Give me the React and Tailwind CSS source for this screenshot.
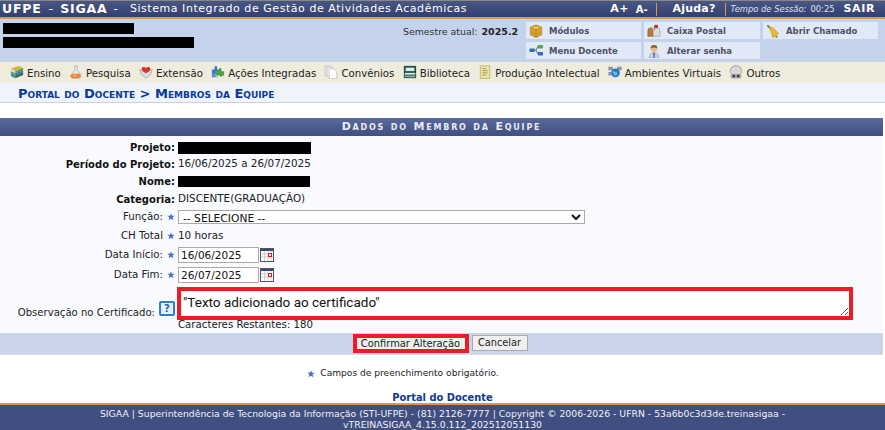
import { useState } from "react";

const menuItems = [
  { label: "Ensino", icon: "books" },
  { label: "Pesquisa", icon: "flask" },
  { label: "Extensão", icon: "heart" },
  { label: "Ações Integradas", icon: "puzzle" },
  { label: "Convênios", icon: "docs" },
  { label: "Biblioteca", icon: "library" },
  { label: "Produção Intelectual", icon: "note" },
  { label: "Ambientes Virtuais", icon: "virtual" },
  { label: "Outros", icon: "others" },
];

function Icon({ name, className = "w-4 h-4" }) {
  const icons = {
    books: (
      <>
        <path d="M1 4l9-3 5 2.500-9 3.500z" fill="#d9b23c" />
        <path d="M1 4l5 3v2.500L1 7z" fill="#e8e0b0" />
        <path d="M6 7l9-3.500v2.500l-9 3.500z" fill="#5f9a3e" />
        <path d="M1 7l5 2.500V12L1 9.500z" fill="#4c8fc0" />
        <path d="M6 9.500l9-3.500v2.500L6 12z" fill="#3a74b4" />
        <path d="M1 9.500L6 12v3l-5-2.500z" fill="#3f8f70" />
        <path d="M6 12l9-3.500v3L6 15z" fill="#2f6a55" />
      </>
    ),
    flask: (
      <>
        <path d="M6.500 1h3v5L13.500 11a3.500 3.500 0 0 1-2.500 4.500H5A3.500 3.500 0 0 1 2.500 11L6.500 6z" fill="#e4e4e4" stroke="#a8a8a8" strokeWidth=".7" />
        <path d="M3.500 10h9l.8 1.800a2.800 2.800 0 0 1-2.500 3.200H4.200a2.800 2.800 0 0 1-2.500-3.200z" fill="#ea8a3c" />
        <circle cx="6.500" cy="12" r="1" fill="#f8c8a0" />
      </>
    ),
    heart: (
      <>
        <path d="M1 5l7 2.500L15 5l-1.500 6L8 15l-5.500-4z" fill="#dcdcdc" stroke="#8c8c8c" strokeWidth=".6" />
        <path d="M8 9.500C4 7.500 2.500 5.500 3.200 3.500 4 1.800 7 2 8 4c1-2 4-2.200 4.800-.5.7 2-.8 4-4.800 6z" fill="#d8342a" />
      </>
    ),
    puzzle: (
      <>
        <path d="M1 5h3V2.500a1.500 1.500 0 0 1 3 0V5h2v5H1z" fill="#3f78c8" />
        <path d="M5 7h4V5a1.500 1.500 0 0 1 3 0v2h3v5h-2a1.500 1.500 0 0 1-3 0H5z" fill="#49a24a" />
        <path d="M1 9h4v3a1.500 1.500 0 0 0 3 0v2H1z" fill="#4f8ad4" />
      </>
    ),
    docs: (
      <>
        <path d="M1 1h6l2 2v9H1z" fill="#ececec" stroke="#bcbcbc" strokeWidth=".8" />
        <path d="M3.500 2.500h6l2 2v9h-8z" fill="#f4f4f4" stroke="#bcbcbc" strokeWidth=".8" />
        <path d="M6 4.500h5.500l3 3v8H6z" fill="#fff" stroke="#bcbcbc" strokeWidth=".8" />
      </>
    ),
    library: (
      <>
        <rect x="1" y="1" width="14" height="14" fill="#1d4f4a" />
        <path d="M3 3h10v4H3z" fill="#dfe9e6" />
        <path d="M2 9h12v2H2z" fill="#dfe9e6" />
        <path d="M2 12h12v2H2z" fill="#8fb0a6" />
      </>
    ),
    note: (
      <>
        <rect x="2.500" y="1" width="11" height="14.500" fill="#eee3a0" stroke="#b0a564" strokeWidth=".8" />
        <path d="M5 4h4M5 6.500h6M5 9h6M5 11.500h4" stroke="#8f8a55" strokeWidth=".9" />
      </>
    ),
    virtual: (
      <>
        <rect x="0.500" y="2" width="5" height="4" fill="#8595a6" />
        <rect x="10.500" y="2" width="5" height="4" fill="#8595a6" />
        <rect x="0.500" y="8" width="3" height="4" fill="#8595a6" />
        <circle cx="8.500" cy="9" r="5" fill="#2076c8" />
        <path d="M5 7.500c2-1.500 3 1 5 0l1 3.500-4 1.500z" fill="#6fb0e6" />
      </>
    ),
    others: (
      <>
        <circle cx="8" cy="7" r="6.500" fill="#dadada" stroke="#8a8a8a" strokeWidth=".7" />
        <circle cx="5" cy="5" r="1.800" fill="#f8f8f8" stroke="#9a9a9a" strokeWidth=".5" />
        <circle cx="10.500" cy="5" r="1.800" fill="#f8f8f8" stroke="#9a9a9a" strokeWidth=".5" />
        <rect x="2" y="10" width="12" height="5.500" rx="2" fill="#a4a4a4" />
        <circle cx="5.500" cy="12.700" r="1.600" fill="#444" />
        <circle cx="10.500" cy="12.700" r="1.600" fill="#444" />
      </>
    ),
    box: (
      <>
        <path d="M8 1l6.500 2.500v9L8 15.500 1.500 12.500v-9z" fill="#d8a030" stroke="#a87818" strokeWidth=".6" />
        <path d="M1.500 3.500L8 6.500l6.500-3" fill="#eec468" stroke="#a87818" strokeWidth=".6" />
        <path d="M8 6.500v9" stroke="#a87818" strokeWidth=".8" />
        <path d="M1.500 9L8 12l6.500-3" fill="none" stroke="#b98a20" strokeWidth=".8" />
      </>
    ),
    mailbox: (
      <>
        <path d="M1 7.500a3 3 0 0 1 6 0V14H1z" fill="#b87c38" stroke="#704818" strokeWidth=".6" />
        <path d="M4 4.500h7a4 4 0 0 1 4 4V14H7V7.500a3 3 0 0 0-3-3z" fill="#dcdcdc" stroke="#8a8a8a" strokeWidth=".6" />
        <path d="M8 1h1v6H8z" fill="#777" />
        <path d="M9 1h3.500v3.500H9z" fill="#d82828" />
      </>
    ),
    tree: (
      <>
        <rect x="0.500" y="5" width="6" height="4" rx=".6" fill="#2e6fc6" />
        <rect x="10" y="1" width="6" height="4" rx=".6" fill="#4faa48" />
        <rect x="10" y="9" width="6" height="4" rx=".6" fill="#2e6fc6" />
        <path d="M6.500 7h1.500l2-4M8 7l2 4" fill="none" stroke="#555" strokeWidth="1" />
      </>
    ),
    person: (
      <>
        <path d="M2.500 16c0-4 2-6 5.500-6s5.500 2 5.500 6z" fill="#c8d0e8" stroke="#8088a8" strokeWidth=".5" />
        <path d="M7 10h2l-.5 6h-1z" fill="#4060a8" />
        <circle cx="8" cy="5.500" r="3.800" fill="#eab88a" />
        <path d="M4.200 5a3.800 3.800 0 0 1 7.600 0c-2-1.200-5.600-1.200-7.600 0z" fill="#8a5a30" />
      </>
    ),
    bell: (
      <>
        <path d="M1.500 1.500l3 3" stroke="#8a6a20" strokeWidth="2" />
        <path d="M4 3.500c3 0 5.500 1.500 7 4l3.500 3.500-7 4.500-1-5C5 8.500 4 6 4 3.500z" fill="#e8bc30" stroke="#b08a18" strokeWidth=".6" />
        <circle cx="12" cy="14.500" r="1.200" fill="#8a6a20" />
      </>
    ),
  };
  return (
    <svg viewBox="0 0 16 16" className={className}>
      {icons[name]}
    </svg>
  );
}

function Star() {
  return (
    <svg viewBox="0 0 10 10" className="w-[8px] h-[8px] shrink-0">
      <path d="M5 .5l1.300 3h3.200L7 5.600l1 3.400-3-1.900L2 9l1-3.400L.5 3.500h3.200z" fill="#4a72c4" />
    </svg>
  );
}

function CalendarIcon() {
  return (
    <svg viewBox="0 0 14 14" className="w-[14px] h-[14px] shrink-0">
      <rect x=".5" y=".5" width="13" height="13" fill="#fff" stroke="#555" />
      <rect x="1" y="1" width="12" height="2" fill="#3a4a80" />
      <path d="M1 6h12M1 9h12M4.500 3v10M8 3v10M11 3v10" stroke="#bbb" strokeWidth=".7" />
      <rect x="8.500" y="5.500" width="3" height="3" fill="#fff" stroke="#e02020" />
    </svg>
  );
}

function NavButton({ icon, label }) {
  return (
    <a className="h-[17px] bg-[#e1e8f6] flex items-center gap-[6px] pl-[3px] text-[8.5px] font-bold text-[#4c5068] whitespace-nowrap">
      <Icon name={icon} className="w-[14px] h-[14px] shrink-0" />
      <span className="pt-[1px]">{label}</span>
    </a>
  );
}

function Row({ height, label, bold, star, nudge = true, children }) {
  return (
    <div className={`flex items-center ${height}`}>
      <div className={`w-[176px] flex items-center justify-end gap-[4px] pr-[1px] shrink-0 ${nudge ? "pt-[1px]" : ""}`}>
        <span className={bold ? "font-bold text-[10px] text-[#111]" : "text-[10.25px] text-[#222]"}>{label}</span>
        {star && <Star />}
      </div>
      <div className="flex items-center gap-[1px] pl-[2px] min-w-0">{children}</div>
    </div>
  );
}

function DateField({ value }) {
  return (
    <>
      <input
        readOnly
        value={value}
        className="w-[81px] h-[16px] bg-white border border-[#aaa] px-[2px] text-[10.5px] text-[#111] outline-none"
      />
      <CalendarIcon />
    </>
  );
}

export default function App() {
  const [obs, setObs] = useState('"Texto adicionado ao certificado"');
  const restantes = 180;

  return (
    <div className="w-[885px] h-[430px] overflow-hidden bg-white flex flex-col font-['DejaVu_Sans',Verdana,sans-serif] text-[11px] text-[#222]">
      {/* barra superior */}
      <div className="h-[19px] shrink-0 bg-gradient-to-b from-[#4a5685] to-[#333f6e] border-t border-[#888] border-b-2 border-b-[#d89a45] flex items-center text-white">
        <span className="pl-[2px] text-[12.5px] font-bold tracking-[0.8px]">UFPE</span>
        <span className="pl-[7px] pr-[7px] text-[13px]">-</span>
        <span className="text-[12.5px] font-bold tracking-[0.8px]">SIGAA</span>
        <span className="pl-[6px] text-[12px]">-</span>
        <span className="pl-[12px] text-[11px] tracking-[0.55px] whitespace-nowrap">Sistema Integrado de Gestão de Atividades Acadêmicas</span>
        <div className="ml-auto flex items-center pr-[10px] whitespace-nowrap">
          <span className="text-[11px] font-bold tracking-[0.3px]">A+</span>
          <span className="pl-[7px] text-[10px] font-bold">A-</span>
          <span className="ml-[8px] h-[13px] border-l border-[#d89a45]" />
          <span className="ml-[16px] text-[11px] font-bold tracking-[0.2px]">Ajuda?</span>
          <span className="ml-[9px] h-[13px] border-l border-[#d89a45]" />
          <span className="ml-[5px] text-[8.4px] italic text-[#dfe3f0]">Tempo de Sessão:</span>
          <span className="ml-[4px] text-[8.4px] text-[#dfe3f0]">00:25</span>
          <span className="ml-[9px] text-[11px] font-bold tracking-[0.6px]">SAIR</span>
        </div>
      </div>

      {/* cabecalho do usuario */}
      <div className="h-[43px] shrink-0 bg-[#c4d2eb] flex">
        <div className="w-[403px] pl-[3px] pt-[4px] flex flex-col gap-[3px]">
          <div className="w-[131px] h-[11px] bg-black" />
          <div className="w-[191px] h-[11px] bg-black" />
        </div>
        <div className="w-[123px] pt-[6px] text-[9.4px] text-[#333] whitespace-nowrap">
          Semestre atual: <b className="text-[#222] text-[9.5px] pl-[1px]">2025.2</b>
        </div>
        <div className="grid grid-cols-[115px_116px_115px] gap-x-[3px] gap-y-[3px] pt-[3px] content-start">
          <NavButton icon="box" label="Módulos" />
          <NavButton icon="mailbox" label="Caixa Postal" />
          <NavButton icon="bell" label="Abrir Chamado" />
          <NavButton icon="tree" label="Menu Docente" />
          <NavButton icon="person" label="Alterar senha" />
        </div>
      </div>

      {/* menu */}
      <nav className="h-[21px] shrink-0 bg-[#efebdd] flex items-center gap-[8.25px] pl-[10px] pt-[2px] text-[10.2px] whitespace-nowrap">
        {menuItems.map((item) => (
          <a key={item.label} className="flex items-center gap-[3px] text-[#222]">
            <Icon name={item.icon} className="w-[14px] h-[14px] shrink-0 -mt-[2px]" />
            <span>{item.label}</span>
          </a>
        ))}
      </nav>

      {/* breadcrumb */}
      <div className="h-[20px] shrink-0 bg-[#eff3fb] border-b border-[#c4d2eb] flex items-center pl-[18px] pt-[3px]">
        <h2 className="text-[13px] font-bold [font-variant:small-caps] text-[#0b3a94]">Portal do Docente &gt; Membros da Equipe</h2>
      </div>

      {/* formulario */}
      <div className="mt-[15px] w-[883px] shrink-0">
        <div className="h-[18px] bg-gradient-to-b from-[#5a6a9c] to-[#404e80] flex items-center justify-center pt-[1px] text-[11px] font-bold [font-variant:small-caps] tracking-[1.8px] text-[#e8ebf5]">
          Dados do Membro da Equipe
        </div>
        <div className="h-[197px] bg-[#f9fafd] pt-[3px] text-[10.4px]">
          <Row height="h-[16px]" label="Projeto:" bold>
            <div className="w-[133px] h-[12px] mt-[2px] bg-black" />
          </Row>
          <Row height="h-[17px]" label="Período do Projeto:" bold>
            <span className="pt-[1px]">16/06/2025 a 26/07/2025</span>
          </Row>
          <Row height="h-[18px]" label="Nome:" bold>
            <div className="w-[132px] h-[11px] bg-black" />
          </Row>
          <Row height="h-[17px]" label="Categoria:" bold>
            <span className="pt-[1px]">DISCENTE(GRADUAÇÃO)</span>
          </Row>
          <Row height="h-[19px]" label="Função:" star>
            <select className="w-[407px] h-[14px] bg-white border border-[#aaa] text-[10.7px] text-[#111] outline-none">
              <option>-- SELECIONE --</option>
            </select>
          </Row>
          <Row height="h-[19px]" label="CH Total" star>
            <span className="pt-[1px]">10 horas</span>
          </Row>
          <Row height="h-[20px]" label="Data Início:" star nudge={false}>
            <DateField value="16/06/2025" />
          </Row>
          <Row height="h-[20px]" label="Data Fim:" star nudge={false}>
            <DateField value="26/07/2025" />
          </Row>
          <div className="flex h-[35px] items-end">
            <div className="w-[176px] shrink-0 flex items-end justify-end gap-[4px] pr-[1px] text-[10.1px]">
              <span className="leading-[13px] mb-[1px]">Observação no Certificado:</span>
              <span className="w-[16px] h-[15px] mb-[4px] border-2 border-[#2f7fd0] rounded-[2px] bg-[#e6f0fb] flex items-center justify-center text-[10px] font-bold leading-none text-[#1f5fa8]">?</span>
            </div>
            <div className="ml-[1px] w-[676px] h-[33px] border-4 border-[#ed1c24] bg-white flex">
              <textarea
                value={obs}
                onChange={(e) => setObs(e.target.value)}
                className="w-full h-full px-[2px] pt-[2px] font-['Roboto',sans-serif] text-[13.5px] leading-[18px] text-[#111] bg-white outline-none resize-y"
              />
            </div>
          </div>
          <div className="pl-[178px] h-[11px] text-[10.2px] leading-[9px] text-[#222]">Caracteres Restantes: {restantes}</div>
        </div>
        <div className="h-[22px] bg-[#cad5ec] border-b border-[#dcdcdc] flex justify-center items-start pt-[1px] pr-[3px] gap-[3px]">
          <div className="border-4 border-[#ed1c24]">
            <button className="block h-[11px] w-[108px] bg-[#efefef] text-[9.9px] leading-[11px] text-[#222] whitespace-nowrap">Confirmar Alteração</button>
          </div>
          <button className="mt-[1px] h-[16px] w-[56px] bg-[#efefef] border border-[#aaa] text-[9.8px] leading-[14px] text-[#222]">Cancelar</button>
        </div>
      </div>

      {/* rodape */}
      <div className="h-[48px] shrink-0 flex flex-col items-center">
        <div className="mt-[12px] mr-[79px] flex items-center gap-[5px] text-[9.1px] text-[#222]">
          <Star />
          <span>Campos de preenchimento obrigatório.</span>
        </div>
        <a className="mt-[10px] text-[9.9px] font-bold text-[#12398f]">Portal do Docente</a>
      </div>
      <footer className="flex-1 bg-[#404e80] border-t-2 border-[#d89a45] text-center text-[9.3px] leading-[11px] text-[#f0f2f8] pt-[3px]">
        SIGAA | Superintendência de Tecnologia da Informação (STI-UFPE) - (81) 2126-7777 | Copyright © 2006-2026 - UFRN - 53a6b0c3d3de.treinasigaa -
        <br />
        vTREINASIGAA_4.15.0.112_202512051130
      </footer>
    </div>
  );
}
